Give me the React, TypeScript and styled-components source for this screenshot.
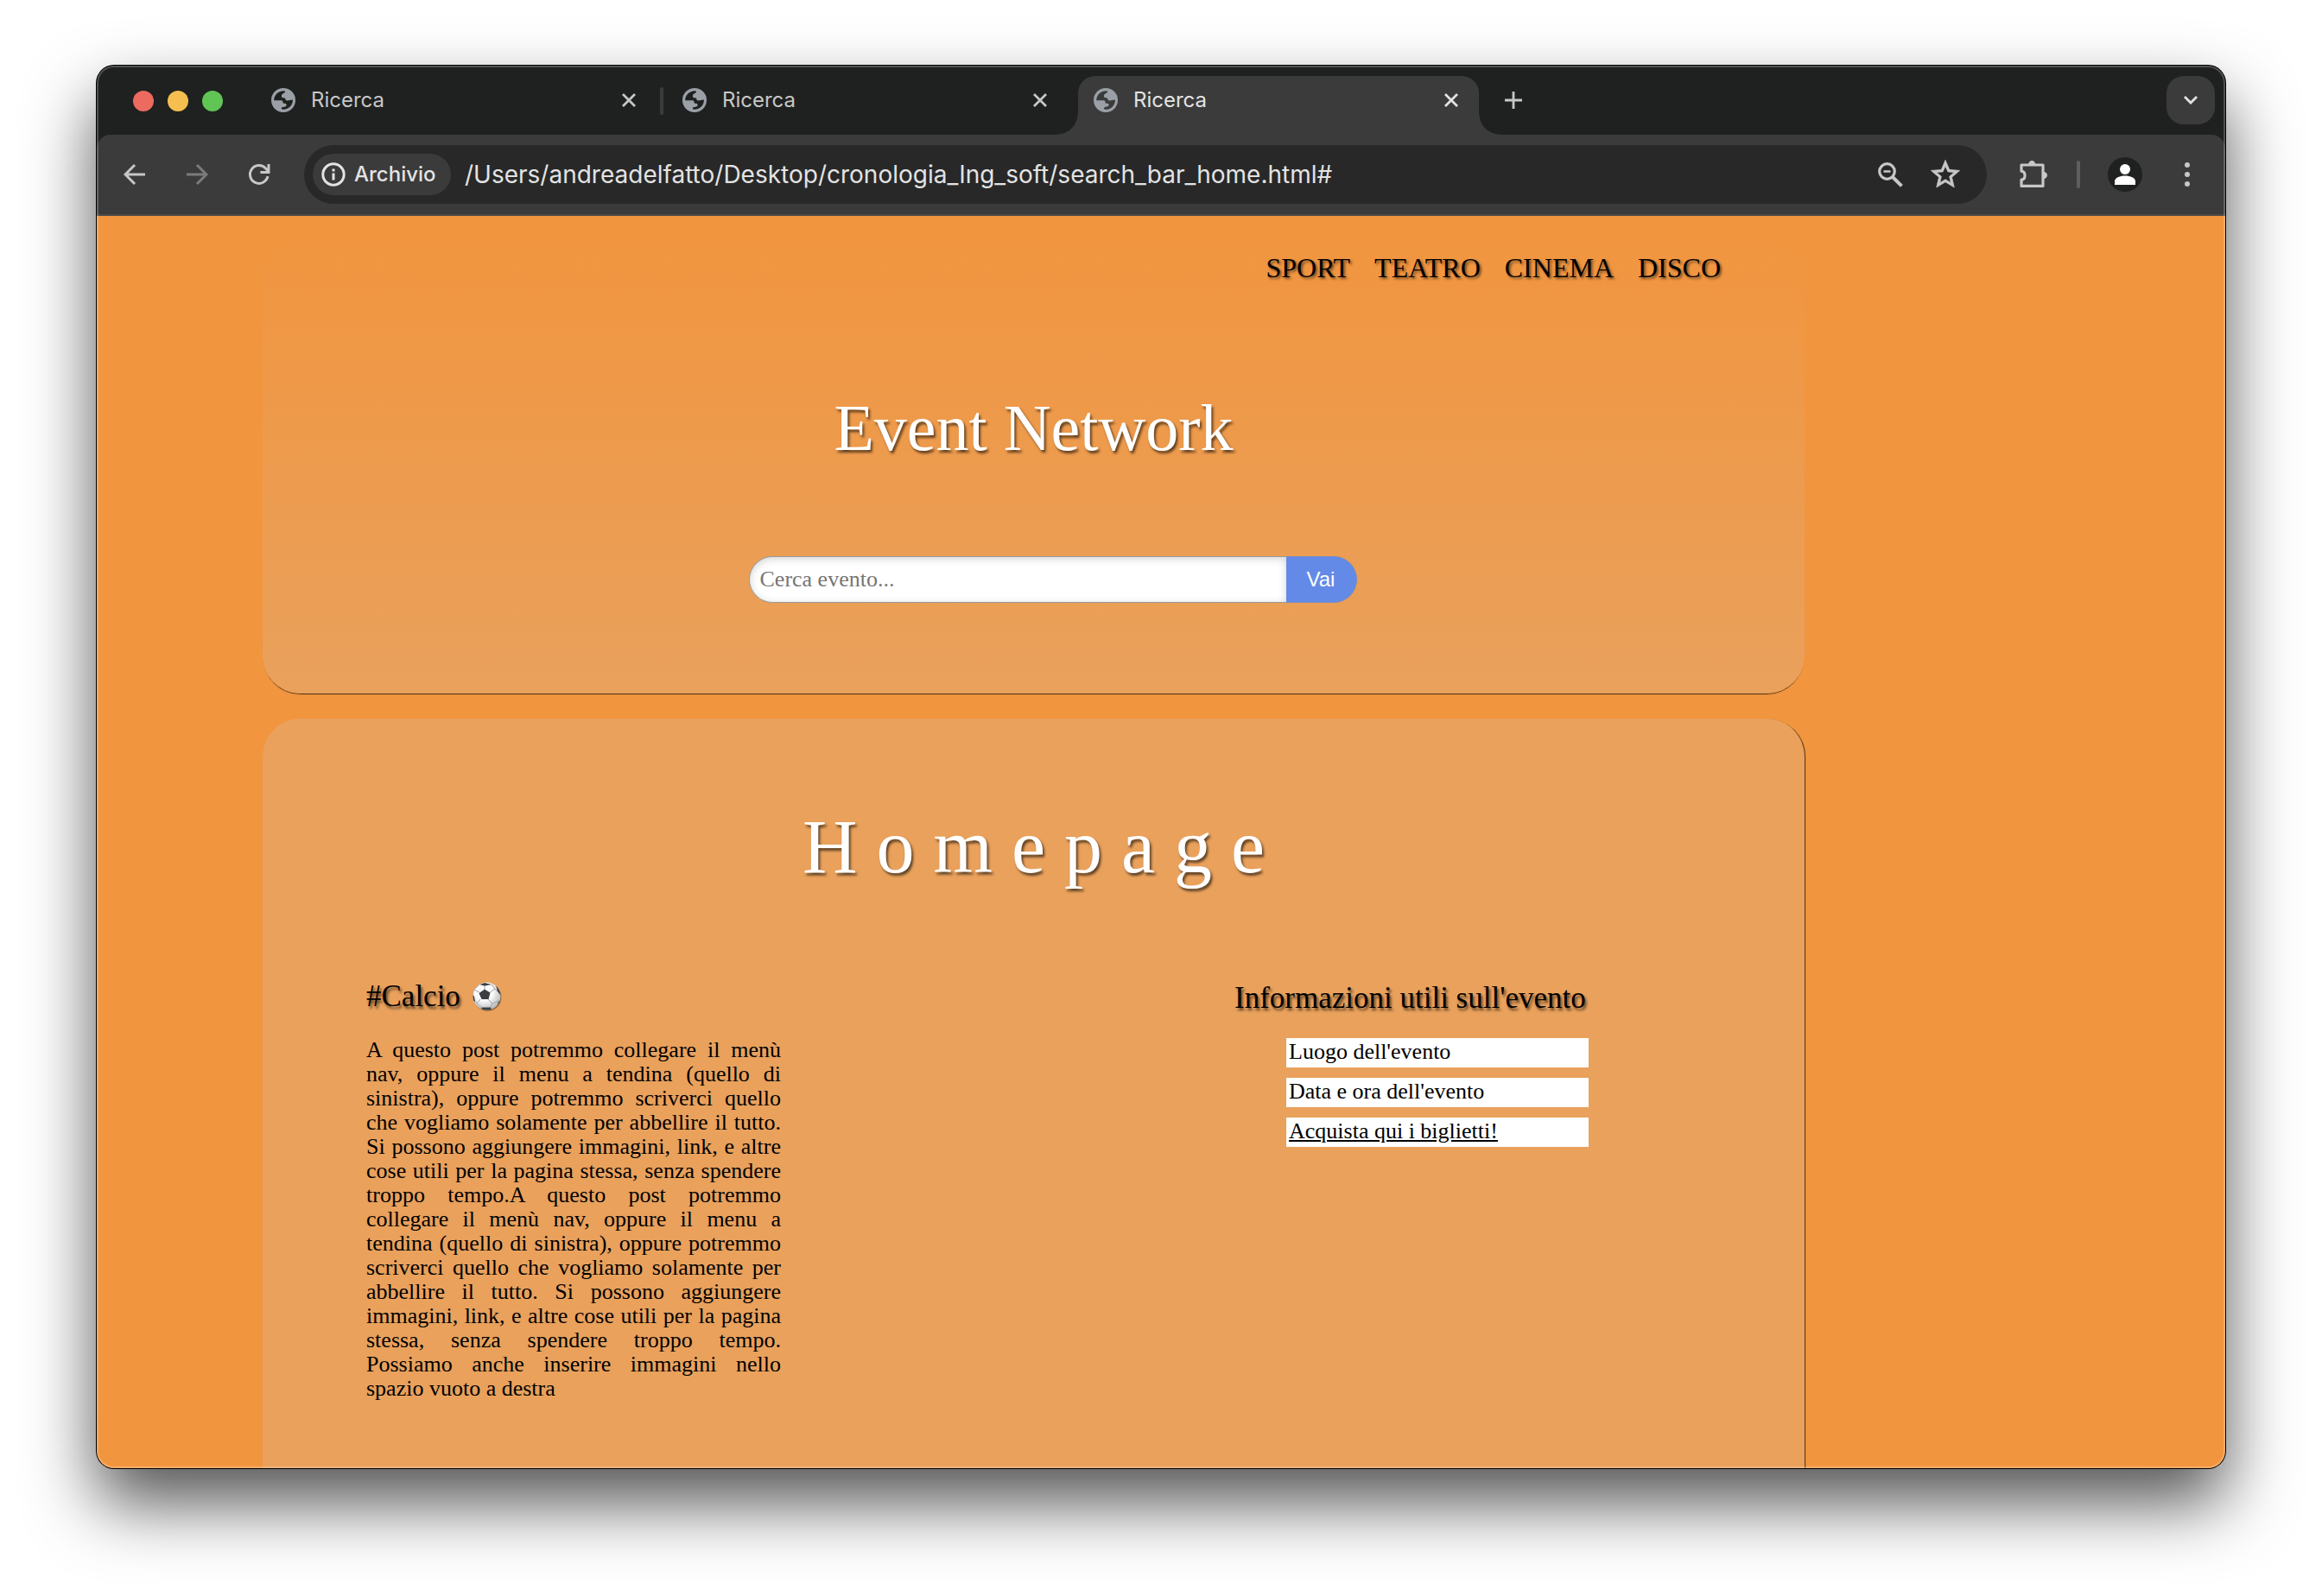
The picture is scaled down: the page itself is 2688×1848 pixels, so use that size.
import React from 'react';
import styled, { createGlobalStyle } from 'styled-components';

const SERIF = `'Liberation Serif', 'Times New Roman', serif`;
const UI = `Inter, 'Liberation Sans', sans-serif`;

const GlobalStyle = createGlobalStyle`
  *, *::before, *::after { box-sizing: border-box; }
  body { margin: 0; background: #fff; }
  button, input { font: inherit; color: inherit; border: 0; padding: 0; margin: 0; background: none; }
  h1, h2, p, ul { margin: 0; padding: 0; font-weight: 400; }
  ul { list-style: none; }
  a { color: inherit; }
`;

const Desktop = styled.div`
  display: flex;
  height: 100vh;
  padding: 76px 112px 148px;
`;

const BrowserWindow = styled.div`
  position: relative;
  display: flex;
  flex: 1;
  flex-direction: column;
  min-width: 0;
  overflow: hidden;
  border-radius: 20px;
  background: #1f2120;
  box-shadow: 0 0 0 1px #000, 0 40px 80px rgba(0, 0, 0, 0.68);

  &::after {
    content: '';
    position: absolute;
    inset: 0;
    border: 2px solid rgba(255, 255, 255, 0.22);
    border-radius: 20px;
    pointer-events: none;
  }
`;

const TabStrip = styled.div`
  display: flex;
  align-items: flex-start;
  height: 80px;
  padding: 12px 12px 0 42px;
  font: 400 24px/56px ${UI};
`;

const TrafficLights = styled.div`
  display: flex;
  align-items: center;
  gap: 16px;
  height: 58px;
  margin-right: 38px;
`;

const Light = styled.button<{ $color: string }>`
  width: 24px;
  height: 24px;
  border-radius: 50%;
  background: ${(p) => p.$color};
`;

const Tab = styled.div<{ $active?: boolean }>`
  position: relative;
  display: flex;
  align-items: flex-start;
  flex: 0 1 464px;
  height: 68px;
  padding: 0 12px 0 18px;
  border-radius: 20px 20px 0 0;
  color: ${(p) => (p.$active ? '#e3e3e3' : '#c7c7c7')};
  background: ${(p) => (p.$active ? '#3b3b3b' : 'transparent')};

  &::before, &::after {
    content: '';
    display: ${(p) => (p.$active ? 'block' : 'none')};
    position: absolute;
    bottom: 0;
    width: 24px;
    height: 24px;
  }
  &::before {
    right: 100%;
    background: radial-gradient(circle at 0 0, transparent 23px, #3b3b3b 24px);
  }
  &::after {
    left: 100%;
    background: radial-gradient(circle at 100% 0, transparent 23px, #3b3b3b 24px);
  }
`;

const TabTitle = styled.button`
  display: flex;
  align-items: center;
  flex: 1;
  gap: 18px;
  height: 56px;
  text-align: left;
`;

const TabDivider = styled.span<{ $hidden?: boolean }>`
  width: 4px;
  height: 32px;
  margin: 13px 4px 0;
  border-radius: 2px;
  background: ${(p) => (p.$hidden ? 'transparent' : '#3b3b3b')};
`;

const IconButton = styled.button<{ $w?: number; $color?: string }>`
  display: flex;
  align-items: center;
  justify-content: center;
  flex: none;
  width: ${(p) => p.$w ?? 56}px;
  height: 56px;
  color: ${(p) => p.$color ?? '#c7c7c7'};
`;

const NewTab = styled(IconButton)`
  margin: 0 auto 0 12px;
`;

const TabSearch = styled(IconButton)`
  border-radius: 20px;
  background: #3b3b3b;
`;

const Toolbar = styled.div`
  display: flex;
  align-items: center;
  height: 94px;
  padding: 0 16px;
  border-bottom: 2px solid #4a4a4a;
  border-radius: 16px 16px 0 0;
  background: #3b3b3b;
  font: 400 28px/40px ${UI};
`;

const NavButtons = styled.div`
  display: flex;
  gap: 16px;
  margin-right: 24px;
`;

const Omnibox = styled.div`
  display: flex;
  align-items: center;
  flex: 1;
  gap: 8px;
  height: 68px;
  margin-right: 26px;
  padding: 0 20px 0 10px;
  border-radius: 34px;
  background: #282828;
  color: #e3e3e3;
`;

const SiteChip = styled.button`
  display: flex;
  align-items: center;
  gap: 10px;
  height: 48px;
  width: 160px;
  padding-left: 10px;
  border-radius: 24px;
  background: #3b3b3b;
  font-size: 24px;
  font-weight: 500;
`;

const Address = styled.input`
  flex: 1;
  min-width: 0;
  padding-left: 8px;
  outline: none;
`;

const ToolbarDivider = styled.span`
  width: 4px;
  height: 32px;
  margin: 0 32px 0 22px;
  border-radius: 2px;
  background: #5f5f5f;
`;

const Profile = styled.button`
  display: flex;
  align-items: center;
  justify-content: center;
  width: 40px;
  height: 40px;
  margin-right: 24px;
  border-radius: 50%;
  background: #1f2120;
`;

const Page = styled.div`
  display: flex;
  flex: 1;
  flex-direction: column;
  gap: 29px;
  min-height: 0;
  overflow: hidden;
  padding: 24px 487px 0 192px;
  background: #f1953f;
  font-family: ${SERIF};
`;

const Header = styled.header`
  flex: none;
  padding: 18px 97px 105px;
  border-radius: 44px;
  background: linear-gradient(to bottom, rgba(233, 161, 92, 0), #e9a15c);
  box-shadow: 0 2px 1px -1px rgba(0, 0, 0, 0.7);
`;

const Categories = styled.nav`
  display: flex;
  justify-content: flex-end;
  gap: 28px;
  font-size: 32px;
  line-height: 36px;

  a {
    text-decoration: none;
    color: #000;
    text-shadow: 2px 2px 3px rgba(0, 0, 0, 0.55);
  }
`;

const Title = styled.h1`
  margin: 123px 0 105px;
  color: #fff;
  font-size: 76px;
  line-height: 88px;
  text-align: center;
  text-shadow: 2px 3px 3px rgba(0, 0, 0, 0.6);
`;

const SearchForm = styled.form`
  display: flex;
  justify-content: center;
  height: 54px;
  padding-left: 44px;
`;

const SearchInput = styled.input`
  width: 622px;
  padding: 0 12px;
  border: 1px solid #999;
  border-right: 0;
  border-radius: 27px 0 0 27px;
  background: #fff;
  box-shadow: inset 0 2px 10px rgba(0, 0, 0, 0.18);
  font-size: 26px;
  outline: none;

  &::placeholder { color: #757575; opacity: 1; }
`;

const SearchButton = styled.button`
  width: 82px;
  border: 1px solid #758cc4;
  border-left: 0;
  border-radius: 0 27px 27px 0;
  background: #638ae6;
  color: #fff;
  font: 400 24px/28px 'Liberation Sans', Arial, sans-serif;
`;

const Main = styled.main`
  flex: none;
  padding: 99px 250px 160px 120px;
  border-radius: 44px;
  background: #e9a15c;
  box-shadow: 2px 0 1px -1px rgba(0, 0, 0, 0.7);
`;

const PageTitle = styled.h1`
  margin: 0 -130px 103px 0;
  color: #fff;
  font-size: 88px;
  line-height: 100px;
  text-align: center;
  text-shadow: 2px 3px 3px rgba(0, 0, 0, 0.6);
`;

const Columns = styled.div`
  display: flex;
  align-items: flex-start;
  justify-content: space-between;
`;

const SectionTitle = styled.h2`
  display: flex;
  align-items: center;
  gap: 14px;
  color: #000;
  font-size: 35px;
  line-height: 40px;
  white-space: nowrap;
  text-shadow: 2px 3px 3px rgba(0, 0, 0, 0.6);
`;

const Post = styled.article`
  width: 480px;

  p {
    margin-top: 28px;
    font-size: 26px;
    line-height: 28px;
    text-align: justify;
  }
`;

const Details = styled.aside`
  width: 410px;
  padding-top: 2px;
`;

const InfoList = styled.ul`
  display: flex;
  flex-direction: column;
  gap: 12px;
  margin: 26px 0 0 60px;
  font-size: 26px;
  line-height: 32px;

  li {
    padding: 0 3px 2px;
    background: #fff;
  }
`;

const Globe = () => (
  <svg width="28" height="28" viewBox="0 0 28 28" aria-hidden="true">
    <path
      fillRule="evenodd"
      fill="#9aa0a6"
      d="M14 0a14 14 0 1 0 0 28a14 14 0 1 0 0-28zM3.2 14.2C3.2 8.4 7.8 3.3 14.4 3.2C16.4 3.3 16.3 4.4 15.6 5.2C14.6 6.2 12.2 6.2 12 8.4C11.9 10.4 12.2 11.3 14.4 11.2C16.4 11.1 16.4 12.2 16.4 13.6C17.6 15 20 14.4 24.9 13.6C25.2 19 21 24.8 13.6 24.8C11.2 24.6 11.6 22.8 13 22.1C14.8 21.6 17.8 21.7 17.6 19.4C17.5 17.8 16.4 17.8 14.4 17.8C13.4 17.6 13.6 15.8 13 14.8C12.4 14.1 11 14.2 9.6 14.2z"
    />
  </svg>
);

const Close = () => (
  <svg width="16" height="16" viewBox="0 0 16 16" fill="none" stroke="currentColor" strokeWidth="2.8" aria-hidden="true">
    <path d="M1 1l14 14M15 1L1 15" />
  </svg>
);

const Arrow = ({ flip }: { flip?: boolean }) => (
  <svg width="26" height="26" viewBox="0 0 26 26" fill="none" stroke="currentColor" strokeWidth="3" aria-hidden="true">
    <path d={flip ? 'M1 13h22M13 2l11 11-11 11' : 'M25 13H3M13 2L2 13l11 11'} />
  </svg>
);

const Reload = () => (
  <svg width="28" height="28" viewBox="0 0 28 28" fill="none" stroke="currentColor" strokeWidth="3" aria-hidden="true">
    <path d="M24 16.2A10.4 10.4 0 1 1 21.6 7L25 10.6M25 2v9.6h-9.6" />
  </svg>
);

const Info = () => (
  <svg width="28" height="28" viewBox="0 0 28 28" fill="none" stroke="currentColor" strokeWidth="3" aria-hidden="true">
    <circle cx="14" cy="14" r="12.2" />
    <path d="M14 12.4v8.2M14 7.4v3" />
  </svg>
);

const ZoomOut = () => (
  <svg width="30" height="30" viewBox="0 0 30 30" fill="none" stroke="currentColor" strokeWidth="3.2" aria-hidden="true">
    <circle cx="11.5" cy="11.5" r="8.8" />
    <path d="M18 18l10.4 10.4" strokeWidth="4" />
    <path d="M7.5 11.5h8" strokeWidth="2.6" />
  </svg>
);

const Star = () => (
  <svg width="40" height="40" viewBox="0 0 24 24" fill="currentColor" stroke="currentColor" strokeWidth="0.4" aria-hidden="true">
    <path d="M22 9.24l-7.19-.62L12 2 9.19 8.63 2 9.24l5.46 4.73L5.82 21 12 17.27 18.18 21l-1.63-7.03L22 9.24zM12 15.4l-3.76 2.27 1-4.28-3.32-2.88 4.38-.38L12 6.1l1.71 4.04 4.38.38-3.32 2.88 1 4.28L12 15.4z" />
  </svg>
);

const Puzzle = () => (
  <svg width="36" height="36" viewBox="0 0 36 36" aria-hidden="true">
    <path
      fill="none"
      stroke="currentColor"
      strokeWidth="3.2"
      strokeLinejoin="round"
      d="M29 7H4v7.2C9.4 14.8 9.4 23.6 4 24.2V31.4H29z"
    />
    <path fill="currentColor" d="M12 7a4.2 5 0 0 1 8.4 0zM29 14.8a5 4.2 0 0 1 0 8.4z" />
  </svg>
);

const Person = () => (
  <svg width="24" height="24" viewBox="0 0 24 24" fill="#fff" aria-hidden="true">
    <circle cx="12" cy="6" r="6" />
    <path d="M0 24v-4c0-4 6-6.4 12-6.4s12 2.4 12 6.4v4z" />
  </svg>
);

const Dots = () => (
  <svg width="6" height="28" viewBox="0 0 6 28" fill="currentColor" aria-hidden="true">
    <circle cx="3" cy="3" r="3" />
    <circle cx="3" cy="14" r="3" />
    <circle cx="3" cy="25" r="3" />
  </svg>
);

const SoccerBall = () => (
  <svg width="34" height="34" viewBox="0 0 34 34" role="img" aria-label="Pallone">
    <defs>
      <radialGradient id="ball" cx="0.4" cy="0.35" r="0.65">
        <stop offset="0.5" stopColor="#fafafa" />
        <stop offset="1" stopColor="#b9bbbd" />
      </radialGradient>
      <clipPath id="ballEdge"><circle cx="16.5" cy="16.5" r="16" /></clipPath>
    </defs>
    <circle cx="17.5" cy="17.8" r="16" fill="#000" opacity="0.35" />
    <circle cx="16.5" cy="16.5" r="16" fill="url(#ball)" />
    <g clipPath="url(#ballEdge)">
      <path
        fill="none"
        stroke="#a3a5a7"
        strokeWidth="1"
        d="M14 9V4M8 12L2 9M20 12l6-4M18 20l5 5M9 20l-4 5M26 8l-4-5M26 8l6 6M23 25l7-3M23 25l-3 6M5 25l6 5M5 25l-3-4M2 9l6-6"
      />
      <path
        fill="#3c3f42"
        d="M14 8.5l6.500 4-2 7.500h-8l-3-7zM8 3l6-2 8 2-8 1.500zM27 4l7 6-1 6-4-5zM0 14l2 3 1 6-4-2zM11 29.500h10l2 4H9zM34 20l-4 3-2 6 6-3z"
      />
    </g>
  </svg>
);

const CATEGORIES = ['SPORT', 'TEATRO', 'CINEMA', 'DISCO'];

const POST_TEXT =
  'A questo post potremmo collegare il menù nav, oppure il menu a tendina (quello di sinistra), oppure potremmo scriverci quello che vogliamo solamente per abbellire il tutto. Si possono aggiungere immagini, link, e altre cose utili per la pagina stessa, senza spendere troppo tempo.A questo post potremmo collegare il menù nav, oppure il menu a tendina (quello di sinistra), oppure potremmo scriverci quello che vogliamo solamente per abbellire il tutto. Si possono aggiungere immagini, link, e altre cose utili per la pagina stessa, senza spendere troppo tempo. Possiamo anche inserire immagini nello spazio vuoto a destra';

function BrowserTab({ active }: { active?: boolean }) {
  return (
    <Tab $active={active}>
      <TabTitle type="button"><Globe />Ricerca</TabTitle>
      <IconButton type="button" $w={40} $color="inherit" aria-label="Chiudi scheda"><Close /></IconButton>
    </Tab>
  );
}

export default function App() {
  return (
    <>
      <GlobalStyle />
      <Desktop>
        <BrowserWindow>
          <TabStrip>
            <TrafficLights>
              <Light type="button" $color="#ed6a5f" aria-label="Chiudi" />
              <Light type="button" $color="#f5bf4f" aria-label="Riduci" />
              <Light type="button" $color="#61c555" aria-label="Ingrandisci" />
            </TrafficLights>
            <BrowserTab />
            <TabDivider />
            <BrowserTab />
            <TabDivider $hidden />
            <BrowserTab active />
            <NewTab type="button" aria-label="Nuova scheda">
              <svg width="20" height="20" viewBox="0 0 20 20" stroke="currentColor" strokeWidth="2.8"><path d="M10 0v20M0 10h20" /></svg>
            </NewTab>
            <TabSearch type="button" $color="#e3e3e3" aria-label="Cerca schede">
              <svg width="18" height="12" viewBox="0 0 18 12" fill="none" stroke="currentColor" strokeWidth="2.8"><path d="M2 2l7 7 7-7" /></svg>
            </TabSearch>
          </TabStrip>

          <Toolbar>
            <NavButtons>
              <IconButton type="button" aria-label="Indietro"><Arrow /></IconButton>
              <IconButton type="button" $color="#7b7b7b" aria-label="Avanti"><Arrow flip /></IconButton>
              <IconButton type="button" aria-label="Ricarica"><Reload /></IconButton>
            </NavButtons>
            <Omnibox>
              <SiteChip type="button"><Info />Archivio</SiteChip>
              <Address
                aria-label="Indirizzo"
                defaultValue="/Users/andreadelfatto/Desktop/cronologia_Ing_soft/search_bar_home.html#"
              />
              <IconButton type="button" aria-label="Zoom"><ZoomOut /></IconButton>
              <IconButton type="button" aria-label="Preferiti"><Star /></IconButton>
            </Omnibox>
            <IconButton type="button" aria-label="Estensioni"><Puzzle /></IconButton>
            <ToolbarDivider />
            <Profile type="button" aria-label="Profilo"><Person /></Profile>
            <IconButton type="button" aria-label="Menu"><Dots /></IconButton>
          </Toolbar>

          <Page>
            <Header>
              <Categories>
                {CATEGORIES.map((name) => <a key={name} href="#">{name}</a>)}
              </Categories>
              <Title>Event Network</Title>
              <SearchForm onSubmit={(e) => e.preventDefault()}>
                <SearchInput type="text" placeholder="Cerca evento..." aria-label="Cerca evento" />
                <SearchButton type="submit">Vai</SearchButton>
              </SearchForm>
            </Header>

            <Main>
              <PageTitle>H o m e p a g e</PageTitle>
              <Columns>
                <Post>
                  <SectionTitle>#Calcio <SoccerBall /></SectionTitle>
                  <p>{POST_TEXT}</p>
                </Post>
                <Details>
                  <SectionTitle>Informazioni utili sull'evento</SectionTitle>
                  <InfoList>
                    <li>Luogo dell'evento</li>
                    <li>Data e ora dell'evento</li>
                    <li><a href="#">Acquista qui i biglietti!</a></li>
                  </InfoList>
                </Details>
              </Columns>
            </Main>
          </Page>
        </BrowserWindow>
      </Desktop>
    </>
  );
}
